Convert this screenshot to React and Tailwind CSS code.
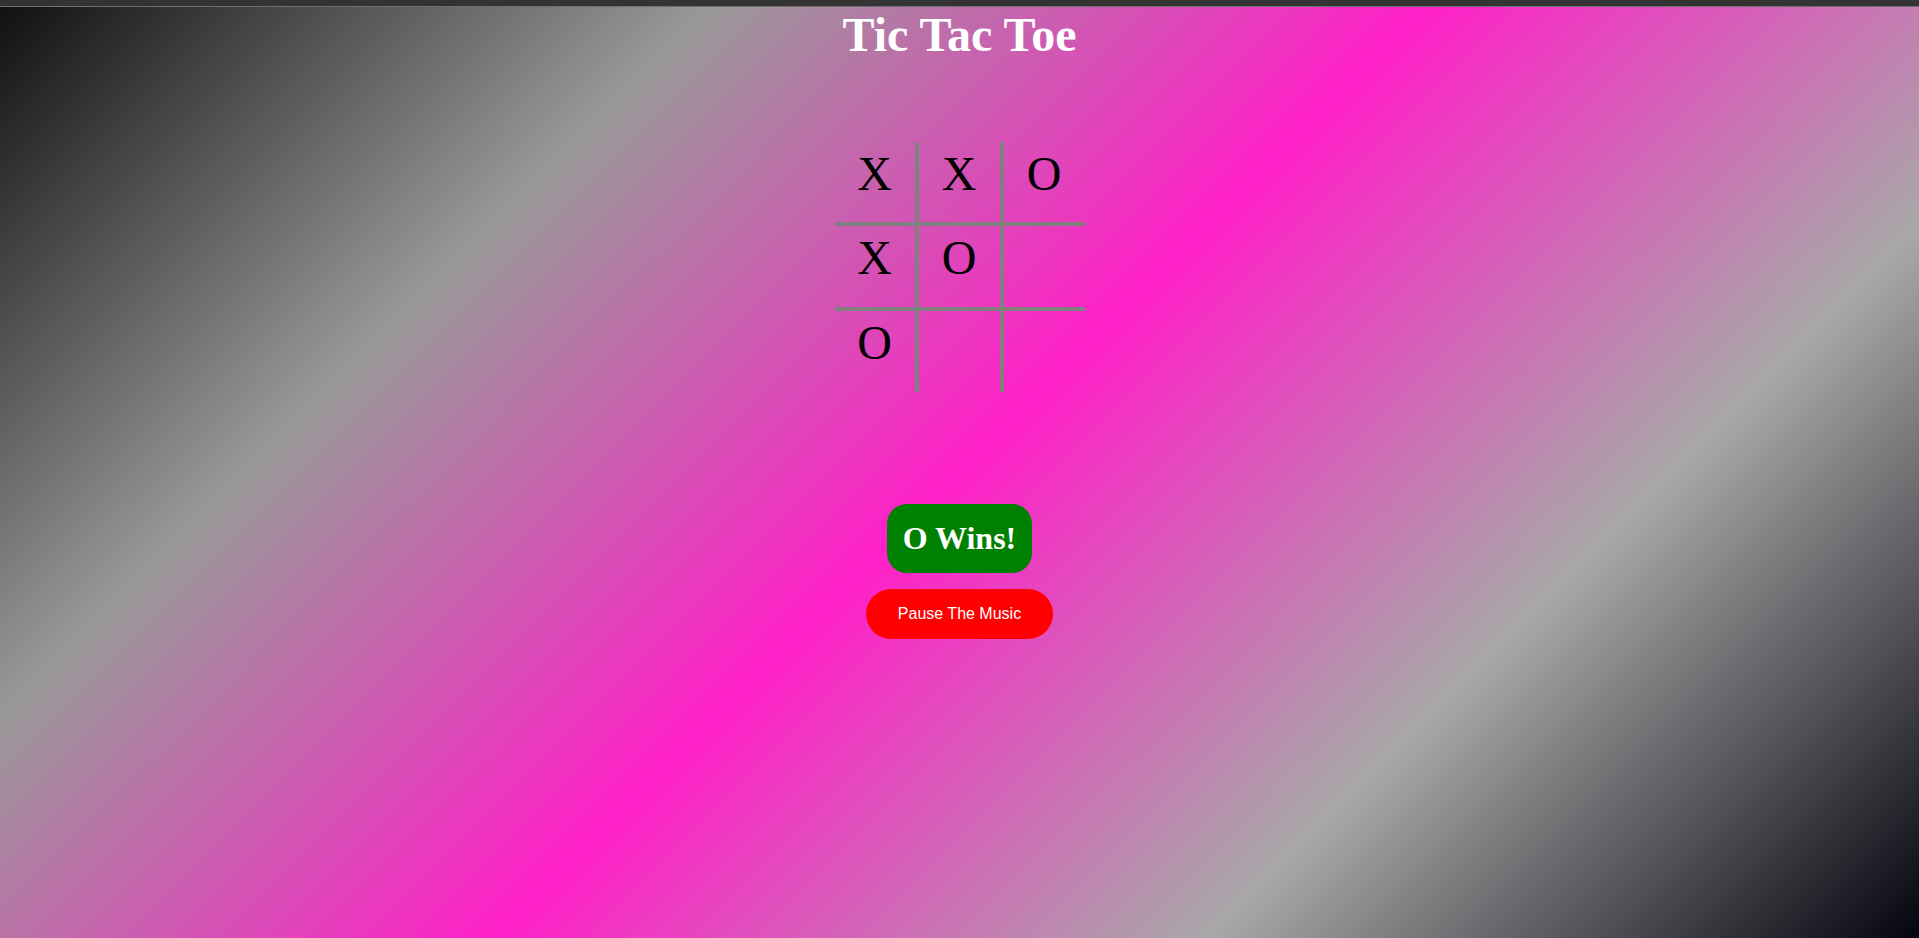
const board = ['X', 'X', 'O', 'X', 'O', '', 'O', '', ''];

function Cell({ value, index }) {
  const col = index % 3;
  const row = Math.floor(index / 3);
  return (
    <div
      className={`flex justify-center text-[48px] leading-[64px] text-black border-[#808080] ${
        col < 2 ? 'border-r-4' : ''
      } ${row < 2 ? 'border-b-4' : ''}`}
    >
      {value}
    </div>
  );
}

export default function App() {
  return (
    <div className="w-full min-h-screen flex flex-col" style={{ fontFamily: '"Liberation Serif", "Times New Roman", serif' }}>
      <div className="h-[7px] bg-[#333333] border-b border-[#707070]" />
      <div className="h-[931px] flex flex-col items-center bg-[linear-gradient(135deg,#111111_0%,#999999_25%,#ff20c8_50%,#a8a8a8_75%,#05050f_100%)]">
        <h1 className="mt-[1px] text-[48px] leading-[53px] font-bold text-white">Tic Tac Toe</h1>

        <div className="mt-[81px] grid grid-cols-[84px_85px_81px] grid-rows-[84px_85px_81px]">
          {board.map((v, i) => (
            <Cell key={i} value={v} index={i} />
          ))}
        </div>

        <div className="mt-[112px] px-4 py-4 rounded-[20px] bg-[#008000] text-white text-[32px] leading-[37px] font-bold">
          O Wins!
        </div>

        <button
          className="mt-4 px-8 py-4 rounded-full bg-[#ff0000] text-white text-base leading-[18px]"
          style={{ fontFamily: '"Liberation Sans", Arial, sans-serif' }}
        >
          Pause The Music
        </button>
      </div>
    </div>
  );
}
